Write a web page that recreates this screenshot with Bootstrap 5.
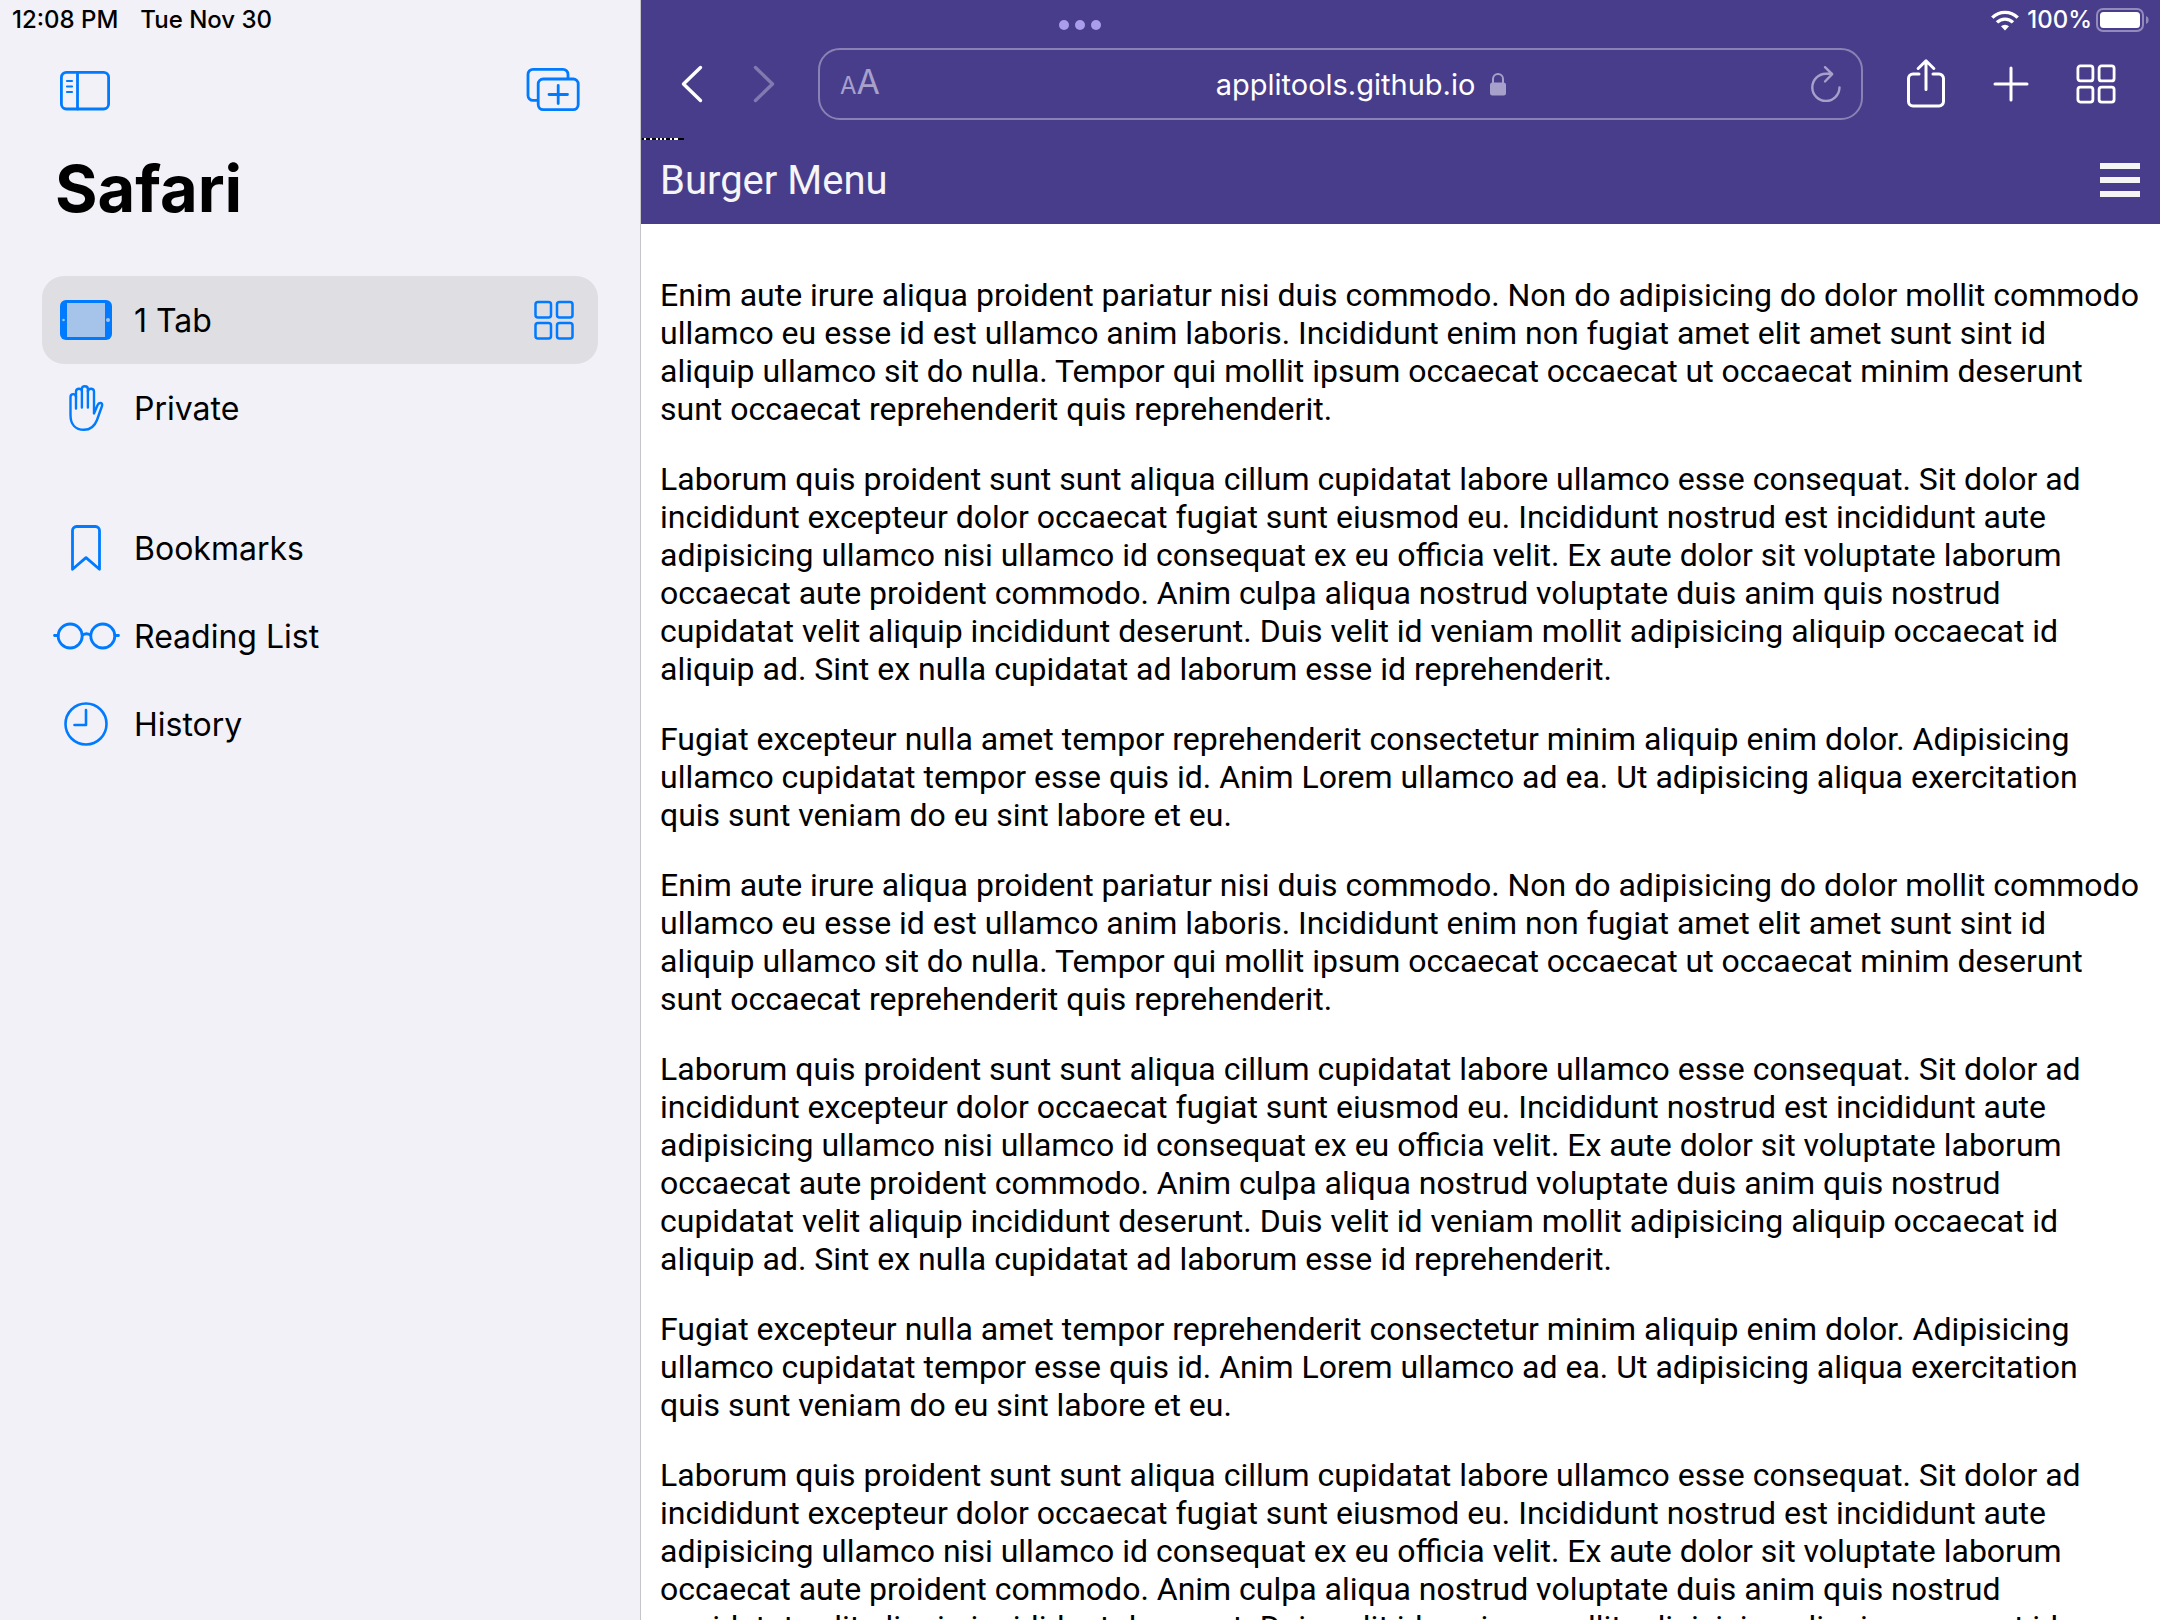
<!DOCTYPE html>
<html lang="en">
<head>
<meta charset="utf-8">
<meta name="viewport" content="width=device-width, initial-scale=1">
<title>Burger Menu</title>
<link href="https://cdn.jsdelivr.net/npm/bootstrap@5.3.0/dist/css/bootstrap.min.css" rel="stylesheet">
<style>
  :root { --ios-blue: #007aff; --slate: #483d8b; --chrome-muted: #a7a0cb; }
  body { font-family: Inter, "Liberation Sans", sans-serif; color: #000; background: #fff; }
  svg { display: block; flex: none; }
  .line-icon { fill: none; stroke: currentColor; stroke-linecap: round; stroke-linejoin: round; }
  button { color: inherit; background: none; border: 0; padding: 0; }

  .side-pane { flex: 0 0 641px; margin-right: -1px; background: #f2f1f7; border-right: 1px solid #c6c5ca; }
  .status-line { height: 30px; font-size: 24px; line-height: 30px; font-weight: 500; }
  .side-status { padding: 5px 12px 0; gap: 22px; height: 35px; }
  .side-tools { padding: 0 60px; height: 110px; color: var(--ios-blue); }
  .side-title { font-size: 65px; line-height: 80px; font-weight: 700; padding-left: 55px; margin: 4px 0 47px; }
  .side-nav { padding: 0 42px; }
  .side-nav a { height: 88px; border-radius: 22px; padding: 0 24px 0 8px; gap: 12px; font-size: 32px; color: #000; text-decoration: none; }
  .side-nav a.active { background: #dfdee3; }
  .side-nav svg { color: var(--ios-blue); }
  .side-nav .side-label { padding-top: 2px; }
  .icon-slot { width: 72px; display: flex; justify-content: center; }
  .side-group + .side-group { margin-top: 52px; }

  .browser-pane { min-width: 0; }
  .browser-top { background: var(--slate); color: #fff; height: 136px; }
  .browser-status { height: 48px; padding: 5px 10px 0 0; }
  .status-dots { left: 419px; top: 20px; }
  .tool-row { height: 72px; padding: 0 22px 0 16px; }
  .nav-btn, .tool-btn { display: flex; align-items: center; justify-content: center; height: 72px; }
  .nav-btn { width: 72px; }
  .nav-btn:disabled { color: #8279b1; }
  .tool-btn { width: 85px; }
  .address-bar { height: 72px; border: 2px solid #8a82b5; border-radius: 22px; margin: 0 20px 0 18px; padding: 0 20px 0 20px; min-width: 0; }
  .address-bar button, .address-bar svg { color: var(--chrome-muted); }
  .text-size { font-size: 34px; line-height: 40px; }
  .text-size span { font-size: 24px; }
  .address-box { gap: 12px; padding-left: 28px; }
  .address-box input { width: 264px; height: 48px; padding: 0; border: 0; background: none; color: #fff; font-size: 29px; text-align: center; }

  .page-head { height: 88px; background: var(--slate); color: whitesmoke; padding: 0 20px; font-family: Roboto, sans-serif; }
  .page-head h1 { font-size: 40px; line-height: 48px; font-weight: 400; margin: 0; padding-top: 2px; }
  .page-marker { left: 2px; top: 2px; }
  .burger-btn { display: grid; gap: 8px; width: 40px; }
  .burger-btn span { height: 6px; background: whitesmoke; }
  .page-text { padding: 52px 20px 0; font: 32px/38px Roboto, sans-serif; }
  .page-text p { margin-bottom: 32px; }
</style>
<script src="https://cdn.jsdelivr.net/npm/bootstrap@5.3.0/dist/js/bootstrap.bundle.min.js"></script>
</head>
<body>
<div class="d-flex vh-100 overflow-hidden">

  <aside class="side-pane position-relative z-1">
    <div class="side-status status-line d-flex"><span>12:08 PM</span><span>Tue Nov 30</span></div>
    <div class="side-tools d-flex justify-content-between">
      <button type="button" class="align-self-start mt-4 pt-2" aria-label="Hide sidebar">
        <svg class="line-icon" width="50" height="46" viewBox="0 0 50 46" stroke-width="2.8"><rect x="1.4" y="5.4" width="47.2" height="36.6" rx="5"/><path d="M17.5 5.5V42"/><path d="M7 14h5M7 19.500h5M7 25h5" stroke-width="2.2"/></svg>
      </button>
      <button type="button" class="align-self-start mt-4 pt-2" aria-label="New tab group">
        <svg class="line-icon" width="54" height="46" viewBox="0 0 54 46" stroke-width="2.8"><path d="M10.500 33.400H7a5 5 0 0 1-5-5V7.400a5 5 0 0 1 5-5h30a5 5 0 0 1 5 5v3.500"/><rect x="12.200" y="12" width="40" height="30.600" rx="5"/><path d="M32.200 18.500v18M23 27.500h18.500"/></svg>
      </button>
    </div>
    <h2 class="side-title">Safari</h2>
    <nav class="side-nav" aria-label="Sidebar">
      <div class="side-group">
        <a href="#" class="active d-flex align-items-center" aria-current="page">
          <span class="icon-slot"><svg width="52" height="40" viewBox="0 0 52 40"><rect width="52" height="40" rx="6" fill="#007aff"/><path d="M7 3h38v34H7z" fill="#a6c4ea"/><circle cx="3.500" cy="20" r="1.300" fill="#a6c4ea"/><circle cx="48" cy="20" r="2" fill="#a6c4ea"/></svg></span>
          <span class="side-label me-auto">1 Tab</span>
          <svg class="line-icon" width="40" height="40" viewBox="0 0 40 40" stroke-width="2.500"><rect x="1.500" y="2" width="15.500" height="15.500" rx="2.500"/><rect x="23" y="2" width="15.500" height="15.500" rx="2.500"/><rect x="1.500" y="23" width="15.500" height="15.500" rx="2.500"/><rect x="23" y="23" width="15.500" height="15.500" rx="2.500"/></svg>
        </a>
        <a href="#" class="d-flex align-items-center">
          <span class="icon-slot"><svg class="line-icon" width="35" height="46" viewBox="0 0 35 46" stroke-width="2.400"><path d="M7 23.500V12c0-1.800-1-2.900-2.700-2.900S1.500 10.200 1.500 12v18C1.500 39.500 6.500 44.800 15 44.800c7 0 10.600-3.500 13-9.800l5-14c.6-1.700-.1-2.700-1.300-3-1.400-.3-2.500.5-3.200 2.200L25 28.500V6.600c0-1.800-1.200-2.900-3-2.900s-3.100 1.100-3.100 2.900"/><path d="M7 12V6.600c0-1.800 1.200-2.900 3-2.900s2.900 1.100 2.900 2.900V22.500M12.900 6.600V4.200c0-1.900 1.200-3 3-3s3 1.100 3 3v18.300"/></svg></span>
          <span class="side-label">Private</span>
        </a>
      </div>
      <div class="side-group">
        <a href="#" class="d-flex align-items-center">
          <span class="icon-slot"><svg class="line-icon" width="30" height="46" viewBox="0 0 30 46" stroke-width="2.800"><path d="M1.500 44.300V5.500a4 4 0 0 1 4-4h19a4 4 0 0 1 4 4v38.800L15 32.600z"/></svg></span>
          <span class="side-label">Bookmarks</span>
        </a>
        <a href="#" class="d-flex align-items-center">
          <span class="icon-slot"><svg class="line-icon" width="67" height="28" viewBox="0 0 67 28" stroke-width="2.800"><circle cx="17.200" cy="14" r="12"/><circle cx="49.800" cy="14" r="12"/><path d="M29.500 13c2.500-1.600 5.500-1.600 8 0M1.500 13.500H5M62 13.500h3.500"/></svg></span>
          <span class="side-label">Reading List</span>
        </a>
        <a href="#" class="d-flex align-items-center">
          <span class="icon-slot"><svg class="line-icon" width="44" height="44" viewBox="0 0 44 44" stroke-width="2.600"><circle cx="22" cy="22" r="20.500"/><path d="M22 8v15H10.500"/></svg></span>
          <span class="side-label">History</span>
        </a>
      </div>
    </nav>
  </aside>

  <main class="browser-pane flex-fill d-flex flex-column overflow-hidden">
    <div class="browser-top flex-shrink-0 position-relative">
      <svg class="status-dots position-absolute" width="42" height="10" viewBox="-1 0 42 10" fill="#a99dec"><circle cx="4" cy="5" r="5"/><circle cx="20" cy="5" r="5"/><circle cx="36" cy="5" r="5"/></svg>
      <div class="browser-status d-flex justify-content-end">
        <div class="status-line d-flex align-items-center">
          <svg class="me-2" width="28" height="21" viewBox="0 0 28 21" fill="none" stroke="#fff" stroke-width="3.400"><path d="M1.300 7.600a18 18 0 0 1 25.400 0M6 12.400a11.300 11.300 0 0 1 16 0"/><path d="M14 20.500l-4-4.200a5.800 5.800 0 0 1 8 0z" fill="#fff" stroke="none"/></svg>
          <span class="me-1">100%</span>
          <svg width="54" height="24" viewBox="0 0 54 24"><rect x="1" y="1" width="46" height="22" rx="6" fill="none" stroke="#938bbb" stroke-width="2"/><rect x="4" y="4" width="40" height="16" rx="3.500" fill="#fff"/><path d="M50 8c3.500 1.300 3.500 6.700 0 8z" fill="#938bbb"/></svg>
        </div>
      </div>
      <div class="tool-row d-flex align-items-center">
        <button type="button" class="nav-btn" aria-label="Back"><svg class="line-icon" width="22" height="38" viewBox="0 0 22 38" stroke-width="3.400"><path d="M19.500 2.500L2.500 19l17 16.500"/></svg></button>
        <button type="button" class="nav-btn" aria-label="Forward" disabled><svg class="line-icon" width="22" height="38" viewBox="0 0 22 38" stroke-width="3.400"><path d="M2.500 2.500L19.500 19l-17 16.500"/></svg></button>
        <form class="address-bar flex-fill d-flex align-items-center justify-content-between" onsubmit="return false">
          <button type="button" class="text-size" aria-label="Text size"><span>A</span>A</button>
          <div class="address-box d-flex align-items-center">
            <input type="text" value="applitools.github.io" aria-label="Address">
            <svg class="line-icon" width="16" height="24" viewBox="0 0 16 24" stroke-width="2"><path d="M3 11V7a5 5 0 0 1 10 0v4"/><rect x="0" y="10.500" width="16" height="13" rx="2.500" fill="#a7a0cb" stroke="none"/></svg>
          </div>
          <button type="button" aria-label="Reload"><svg class="line-icon" width="30" height="38" viewBox="0 0 30 38" stroke-width="2.400"><path d="M28.500 22.500A13.600 13.600 0 1 1 15 8.700h6M14 2.200l7.200 7L14 16.500"/></svg></button>
        </form>
        <button type="button" class="tool-btn" aria-label="Share"><svg class="line-icon" width="38" height="50" viewBox="0 1 38 50" stroke-width="3"><path d="M12 16H6a4.500 4.500 0 0 0-4.500 4.500v23A4.500 4.500 0 0 0 6 48h26a4.500 4.500 0 0 0 4.500-4.500v-23A4.500 4.500 0 0 0 32 16h-6"/><path d="M19 31.500V3M11.200 10.500L19 2.800l7.800 7.700"/></svg></button>
        <button type="button" class="tool-btn" aria-label="New tab"><svg class="line-icon" width="36" height="36" viewBox="0 0 36 36" stroke-width="3"><path d="M18 2v32M2 18h32"/></svg></button>
        <button type="button" class="tool-btn" aria-label="Tab overview"><svg class="line-icon" width="40" height="40" viewBox="0 0 40 40" stroke-width="2.800"><rect x="1.900" y="1.900" width="15" height="15" rx="2.500"/><rect x="23.100" y="1.900" width="15" height="15" rx="2.500"/><rect x="1.900" y="23.100" width="15" height="15" rx="2.500"/><rect x="23.100" y="23.100" width="15" height="15" rx="2.500"/></svg></button>
      </div>
    </div>

    <header class="page-head flex-shrink-0 d-flex align-items-center justify-content-between position-relative">
      <svg class="page-marker position-absolute" width="42" height="2" viewBox="0 0 42 2" shape-rendering="crispEdges"><path fill="#000" d="M0 0h42v2H0z"/><path fill="#fff" d="M2 0h2v2H2zM8 0h2v2H8zM14 0h2v2h-2zM18 0h2v2h-2zM22 0h2v2h-2zM28 0h2v2h-2zM32 0h4v2h-4z"/></svg>
      <h1>Burger Menu</h1>
      <button type="button" class="burger-btn" aria-label="Open menu"><span></span><span></span><span></span></button>
    </header>

    <article class="page-text">
      <p>Enim aute irure aliqua proident pariatur nisi duis commodo. Non do adipisicing do dolor mollit commodo ullamco eu esse id est ullamco anim laboris. Incididunt enim non fugiat amet elit amet sunt sint id aliquip ullamco sit do nulla. Tempor qui mollit ipsum occaecat occaecat ut occaecat minim deserunt sunt occaecat reprehenderit quis reprehenderit.</p>
      <p>Laborum quis proident sunt sunt aliqua cillum cupidatat labore ullamco esse consequat. Sit dolor ad incididunt excepteur dolor occaecat fugiat sunt eiusmod eu. Incididunt nostrud est incididunt aute adipisicing ullamco nisi ullamco id consequat ex eu officia velit. Ex aute dolor sit voluptate laborum occaecat aute proident commodo. Anim culpa aliqua nostrud voluptate duis anim quis nostrud cupidatat velit aliquip incididunt deserunt. Duis velit id veniam mollit adipisicing aliquip occaecat id aliquip ad. Sint ex nulla cupidatat ad laborum esse id reprehenderit.</p>
      <p>Fugiat excepteur nulla amet tempor reprehenderit consectetur minim aliquip enim dolor. Adipisicing ullamco cupidatat tempor esse quis id. Anim Lorem ullamco ad ea. Ut adipisicing aliqua exercitation quis sunt veniam do eu sint labore et eu.</p>
      <p>Enim aute irure aliqua proident pariatur nisi duis commodo. Non do adipisicing do dolor mollit commodo ullamco eu esse id est ullamco anim laboris. Incididunt enim non fugiat amet elit amet sunt sint id aliquip ullamco sit do nulla. Tempor qui mollit ipsum occaecat occaecat ut occaecat minim deserunt sunt occaecat reprehenderit quis reprehenderit.</p>
      <p>Laborum quis proident sunt sunt aliqua cillum cupidatat labore ullamco esse consequat. Sit dolor ad incididunt excepteur dolor occaecat fugiat sunt eiusmod eu. Incididunt nostrud est incididunt aute adipisicing ullamco nisi ullamco id consequat ex eu officia velit. Ex aute dolor sit voluptate laborum occaecat aute proident commodo. Anim culpa aliqua nostrud voluptate duis anim quis nostrud cupidatat velit aliquip incididunt deserunt. Duis velit id veniam mollit adipisicing aliquip occaecat id aliquip ad. Sint ex nulla cupidatat ad laborum esse id reprehenderit.</p>
      <p>Fugiat excepteur nulla amet tempor reprehenderit consectetur minim aliquip enim dolor. Adipisicing ullamco cupidatat tempor esse quis id. Anim Lorem ullamco ad ea. Ut adipisicing aliqua exercitation quis sunt veniam do eu sint labore et eu.</p>
      <p>Laborum quis proident sunt sunt aliqua cillum cupidatat labore ullamco esse consequat. Sit dolor ad incididunt excepteur dolor occaecat fugiat sunt eiusmod eu. Incididunt nostrud est incididunt aute adipisicing ullamco nisi ullamco id consequat ex eu officia velit. Ex aute dolor sit voluptate laborum occaecat aute proident commodo. Anim culpa aliqua nostrud voluptate duis anim quis nostrud cupidatat velit aliquip incididunt deserunt. Duis velit id veniam mollit adipisicing aliquip occaecat id aliquip ad. Sint ex nulla cupidatat ad laborum esse id reprehenderit.</p>
    </article>
  </main>
</div>
</body>
</html>
